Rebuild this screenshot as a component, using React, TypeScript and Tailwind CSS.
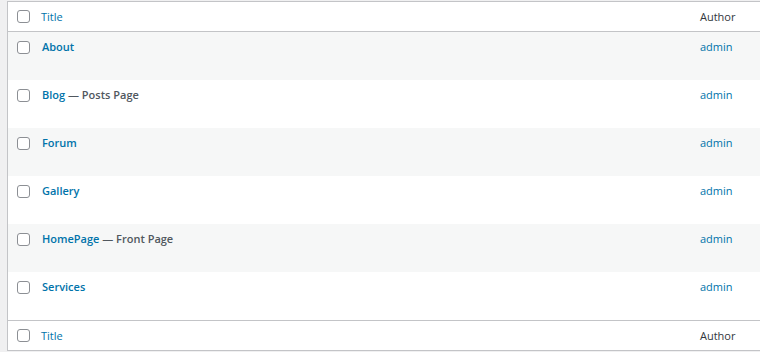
const rows = [
  { title: "About", state: "" },
  { title: "Blog", state: "Posts Page" },
  { title: "Forum", state: "" },
  { title: "Gallery", state: "" },
  { title: "HomePage", state: "Front Page" },
  { title: "Services", state: "" },
];

const Checkbox = () => (
  <span className="block w-[13px] h-[13px] rounded-[3px] border border-[#8c8f94] bg-white" />
);

const HeadRow = ({ top }: { top: boolean }) => (
  <div
    className={`flex items-center h-[30px] bg-white ${
      top ? "border-b" : "border-t"
    } border-[#c3c4c7]`}
  >
    <div className="w-[33px] pl-[9px] flex items-center">
      <Checkbox />
    </div>
    <div className="w-[659px] pt-[2px] text-[#0073aa]">Title</div>
    <div className="pt-[2px] text-[#32373c]">Author</div>
  </div>
);

export default function App() {
  return (
    <div
      className="w-[760px] h-[352px] overflow-hidden bg-[#f0f0f1] pl-[7px] pt-[1px] text-[11px]"
      style={{ fontFamily: '"Open Sans", "Noto Sans", sans-serif' }}
    >
      <div className="w-[790px] border border-[#c3c4c7] bg-white">
        <HeadRow top />
        {rows.map((r, i) => (
          <div
            key={r.title}
            className={`flex items-start h-[48px] pt-[7px] ${
              i % 2 === 0 ? "bg-[#f6f7f7]" : "bg-white"
            }`}
          >
            <div className="w-[33px] pl-[9px] pt-[2px] flex items-center">
              <Checkbox />
            </div>
            <div className="w-[659px] pl-[1px] font-semibold">
              <span className="text-[#0073aa]">{r.title}</span>
              {r.state && (
                <span className="text-[#50575e]"> — {r.state}</span>
              )}
            </div>
            <div className="text-[#0073aa]">admin</div>
          </div>
        ))}
        <HeadRow top={false} />
      </div>
    </div>
  );
}
